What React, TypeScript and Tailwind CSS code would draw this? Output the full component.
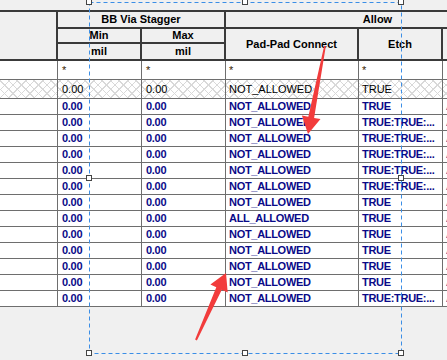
const cols = "grid grid-cols-[58px_84px_84px_133px_84px_84px]";

const rows: [string, string][] = [
  ["NOT_ALLOWED", "TRUE"],
  ["NOT_ALLOWED", "TRUE:TRUE:..."],
  ["NOT_ALLOWED", "TRUE:TRUE:..."],
  ["NOT_ALLOWED", "TRUE:TRUE:..."],
  ["NOT_ALLOWED", "TRUE:TRUE:..."],
  ["NOT_ALLOWED", "TRUE:TRUE:..."],
  ["NOT_ALLOWED", "TRUE"],
  ["ALL_ALLOWED", "TRUE"],
  ["NOT_ALLOWED", "TRUE"],
  ["NOT_ALLOWED", "TRUE"],
  ["NOT_ALLOWED", "TRUE"],
  ["NOT_ALLOWED", "TRUE"],
  ["NOT_ALLOWED", "TRUE:TRUE:..."],
];

const hatch =
  "bg-white bg-[image:repeating-linear-gradient(45deg,#d9d9d9_0_1px,transparent_1px_6px),repeating-linear-gradient(-45deg,#d9d9d9_0_1px,transparent_1px_6px)]";

const Head = ({ className, children }: { className?: string; children?: React.ReactNode }) => (
  <div className={`flex items-center justify-center bg-[#f0f0f0] border-[#3a3a3a] font-bold text-black ${className ?? ""}`}>
    {children}
  </div>
);

const Cell = ({ className, children }: { className?: string; children?: React.ReactNode }) => (
  <div className={`flex items-center whitespace-nowrap overflow-hidden border-r border-[#6e6e6e] ${className ?? ""}`}>
    {children}
  </div>
);

const Overlay = () => {
  const handles = [
    [89, 2], [245, 2], [401, 2],
    [89, 178], [401, 178],
    [89, 353], [245, 353], [401, 353],
  ];
  return (
    <svg className="absolute inset-0 pointer-events-none" width="447" height="360" viewBox="0 0 447 360">
      <rect x="89.5" y="2.5" width="312" height="351" fill="none" stroke="#3b8ee6" strokeWidth="1" strokeDasharray="4 3" />
      {handles.map(([x, y]) => (
        <rect key={`${x}-${y}`} x={x - 2.5} y={y - 2.5} width="5" height="5" fill="#fff" stroke="#444" strokeWidth="1" />
      ))}
      <polygon
        fill="#f23c3c"
        points="325.8,46.2 314.1,117.9 320.5,119.1 308,134 301.9,115.5 308.3,116.7 324.2,45.8"
      />
      <polygon
        fill="#f23c3c"
        points="196.9,340.4 221.8,289.7 227.7,292.4 226,273 210.4,284.6 216.3,287.3 195.1,339.6"
      />
    </svg>
  );
};

const App = () => {
  return (
    <div className="relative w-[447px] h-[360px] overflow-hidden bg-[#f0f0f0] pt-[10px] font-['Liberation_Sans',Arial,sans-serif] text-[11px] leading-none">
      <div className="w-[527px] border-t-2 border-[#3a3a3a]">
        {/* header */}
        <div className={`${cols} grid-rows-[17px_15px_15px] border-b-2 border-[#3a3a3a]`}>
          <Head className="row-span-3 border-r-2" />
          <Head className="col-span-2 border-r-2 border-b-2">BB Via Stagger</Head>
          <Head className="col-span-3 border-b-2 pl-[2px]">Allow</Head>
          <Head className="border-r-2 border-b-2">Min</Head>
          <Head className="border-r-2 border-b-2">Max</Head>
          <Head className="row-span-2 border-r-2">Pad-Pad Connect</Head>
          <Head className="row-span-2 border-r-2">Etch</Head>
          <Head className="row-span-2 border-r-2" />
          <Head className="border-r-2">mil</Head>
          <Head className="border-r-2">mil</Head>
        </div>

        {/* filter row */}
        <div className={`${cols} h-[19px] bg-white border-b border-[#6e6e6e] text-[#3a2400]`}>
          <Cell />
          <Cell className="pl-[4px] items-start pt-[4px]">*</Cell>
          <Cell className="pl-[4px] items-start pt-[4px]">*</Cell>
          <Cell className="pl-[3px] items-start pt-[4px]">*</Cell>
          <Cell className="pl-[3px] items-start pt-[4px]">*</Cell>
          <Cell />
        </div>

        {/* new row */}
        <div className={`${cols} h-[19px] ${hatch} border-b border-[#6e6e6e] text-black`}>
          <Cell />
          <Cell className="pl-[4px]">0.00</Cell>
          <Cell className="pl-[4px]">0.00</Cell>
          <Cell className="pl-[3px]">NOT_ALLOWED</Cell>
          <Cell className="pl-[3px]">TRUE</Cell>
          <Cell />
        </div>

        {/* data rows */}
        {rows.map(([connect, etch], i) => (
          <div
            key={i}
            className={`${cols} h-[16px] bg-white border-b border-[#6e6e6e] font-bold text-[#0a0a88] tracking-[-0.3px]`}
          >
            <Cell />
            <Cell className="pl-[4px]">0.00</Cell>
            <Cell className="pl-[4px]">0.00</Cell>
            <Cell className="pl-[3px]">{connect}</Cell>
            <Cell className="pl-[3px]">{etch}</Cell>
            <Cell className="pl-[3px]">ALLOWED</Cell>
          </div>
        ))}
      </div>
      <Overlay />
    </div>
  );
};

export default App;
